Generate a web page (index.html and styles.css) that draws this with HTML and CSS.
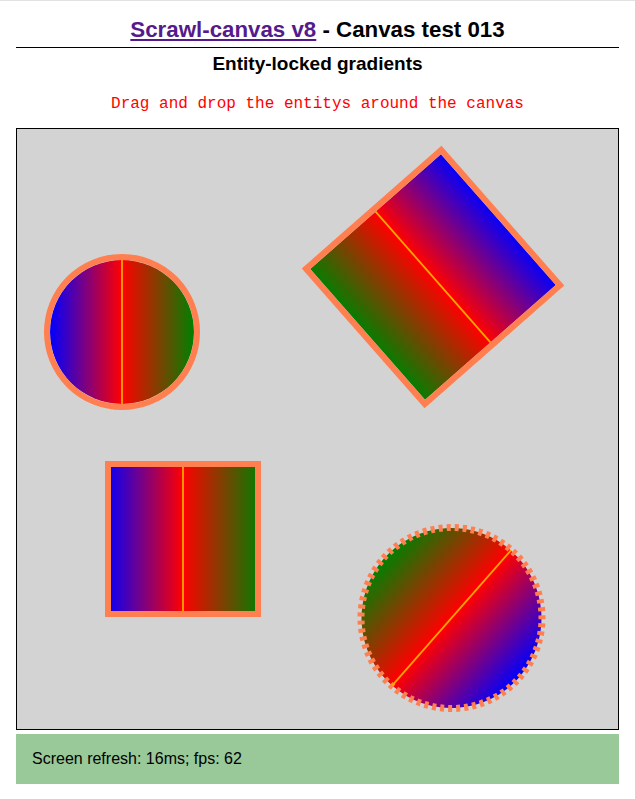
FILE: index.html
```html
<!DOCTYPE html>
<html lang="en">
<head>
<meta charset="utf-8">
<title>Scrawl-canvas v8 - Canvas test 013</title>
<link rel="stylesheet" href="styles.css">
</head>
<body>
<div class="page">
  <h1 class="title"><a class="title-link" href="#">Scrawl-canvas v8</a> - Canvas test 013</h1>
  <hr class="rule">
  <h2 class="subtitle">Entity-locked gradients</h2>
  <p class="instructions">Drag and drop the entitys around the canvas</p>
  <div class="canvas">
    <svg class="stage" viewBox="0 0 601 600" width="601" height="600" xmlns="http://www.w3.org/2000/svg">
      <defs>
        <linearGradient id="g1" gradientUnits="userSpaceOnUse" x1="-72" y1="0" x2="72" y2="0">
          <stop offset="0" stop-color="#0000ff"/>
          <stop offset="0.5" stop-color="#ff0000"/>
          <stop offset="1" stop-color="#008000"/>
        </linearGradient>
        <linearGradient id="g2" gradientUnits="userSpaceOnUse" x1="-78" y1="0" x2="78" y2="0">
          <stop offset="0" stop-color="#0000ff"/>
          <stop offset="0.5" stop-color="#ff0000"/>
          <stop offset="1" stop-color="#008000"/>
        </linearGradient>
        <linearGradient id="g3" gradientUnits="userSpaceOnUse" x1="-90" y1="0" x2="90" y2="0">
          <stop offset="0" stop-color="#0000ff"/>
          <stop offset="0.5" stop-color="#ff0000"/>
          <stop offset="1" stop-color="#008000"/>
        </linearGradient>
        <linearGradient id="g4" gradientUnits="userSpaceOnUse" x1="-90" y1="0" x2="90" y2="0">
          <stop offset="0" stop-color="#0000ff"/>
          <stop offset="0.5" stop-color="#ff0000"/>
          <stop offset="1" stop-color="#008000"/>
        </linearGradient>
      </defs>

      <!-- circle 1 -->
      <g transform="translate(105 203)">
        <circle r="72" fill="url(#g1)"/>
        <circle r="75" fill="none" stroke="#ff7f50" stroke-width="6"/>
        <line x1="0" y1="-72" x2="0" y2="72" stroke="#ffa500" stroke-width="1.8"/>
      </g>

      <!-- square 1 -->
      <g transform="translate(166 410)">
        <rect x="-72" y="-72" width="144" height="144" fill="url(#g2)"/>
        <rect x="-75" y="-75" width="150" height="150" fill="none" stroke="#ff7f50" stroke-width="6"/>
        <line x1="0" y1="-72" x2="0" y2="72" stroke="#ffa500" stroke-width="1.8"/>
      </g>

      <!-- rotated square -->
      <g transform="translate(416 148) rotate(138.7)">
        <rect x="-87" y="-87" width="174" height="174" fill="url(#g3)"/>
        <rect x="-90" y="-90" width="180" height="180" fill="none" stroke="#ff7f50" stroke-width="6"/>
        <line x1="0" y1="-87" x2="0" y2="87" stroke="#ffa500" stroke-width="1.8"/>
      </g>

      <!-- dashed circle -->
      <g transform="translate(434.5 489) rotate(221.3)">
        <circle r="90" fill="url(#g4)"/>
        <circle r="90.5" fill="none" stroke="#ff7f50" stroke-width="7" stroke-dasharray="4 4"/>
        <line x1="0" y1="-90" x2="0" y2="90" stroke="#ffa500" stroke-width="1.8"/>
      </g>
    </svg>
  </div>
  <div class="report">Screen refresh: 16ms; fps: 62</div>
</div>
</body>
</html>
```

FILE: styles.css
```css
html, body {
  margin: 0;
  padding: 0;
  background: #ffffff;
}

body {
  border-top: 1px solid #e2e2e2;
  font-family: "Liberation Sans", Arial, sans-serif;
  color: #000000;
}

.page {
  padding: 0 16px;
}

.title {
  margin: 16px 0 4px;
  font-size: 22.3px;
  line-height: 26px;
  font-weight: bold;
  text-align: center;
}

.title-link {
  color: #551a8b;
  text-decoration: underline;
}

.rule {
  margin: 0;
  border: 0;
  border-top: 1px solid #000000;
  height: 0;
}

.subtitle {
  margin: 5px 0 0;
  font-size: 19px;
  line-height: 22px;
  font-weight: bold;
  text-align: center;
}

.instructions {
  margin: 20px 0 15px;
  font-family: "Liberation Mono", "Courier New", monospace;
  font-size: 16px;
  line-height: 18px;
  color: #ff0000;
  text-align: center;
}

.canvas {
  box-sizing: border-box;
  width: 100%;
  height: 602px;
  border: 1px solid #000000;
  background: #d3d3d3;
  overflow: hidden;
}

.stage {
  display: block;
}

.report {
  margin-top: 4px;
  padding: 16px;
  background: #99c899;
  font-size: 16px;
  line-height: 18px;
}
```
